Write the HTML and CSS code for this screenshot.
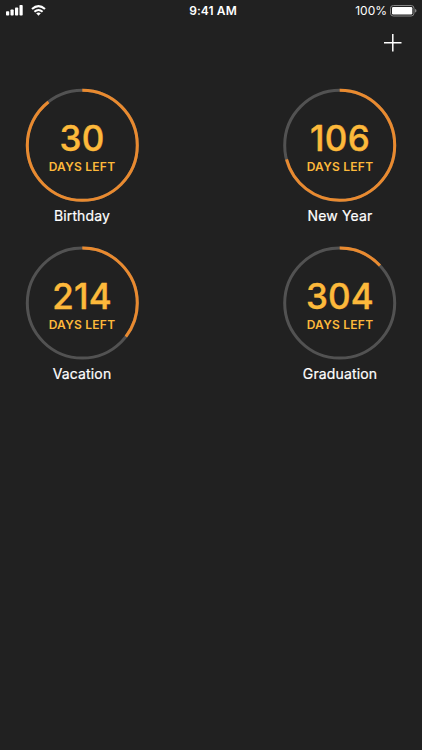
FILE: index.html
```html
<!DOCTYPE html>
<html lang="en">
<head>
<meta charset="utf-8">
<title>Countdowns</title>
<link rel="stylesheet" href="styles.css">
</head>
<body>
<header class="status">
  <div class="signals">
    <svg width="17" height="11" viewBox="0 0 17 11" fill="#fff"><rect x="0" y="6.2" width="3.2" height="4.4" rx=".8"/><rect x="4.5" y="4.4" width="3.2" height="6.2" rx=".8"/><rect x="9" y="2.4" width="3.2" height="8.2" rx=".8"/><rect x="13.5" y="0" width="3.2" height="10.6" rx=".8"/></svg>
    <svg width="16" height="11" viewBox="0 0 16 11" fill="none" stroke="#fff"><path stroke-width="2.1" d="M1 4Q7.5-1.8 14 4"/><path stroke-width="2" d="M3.4 6.8Q7.5 3.1 11.6 6.8"/><path fill="#fff" stroke="none" d="M5.2 8.3Q7.5 6.5 9.8 8.3L7.5 10.8Z"/></svg>
  </div>
  <div class="time">9:41 AM</div>
  <div class="power">
    <span>100%</span>
    <svg width="27" height="12" viewBox="0 0 27 12"><rect x=".5" y=".5" width="23.5" height="10.5" rx="2.8" fill="none" stroke="#858585"/><rect x="2" y="2" width="20.3" height="7.5" rx="1.2" fill="#fff"/><path d="M25 4Q26.5 4.2 26.5 5.8T25 7.6Z" fill="#858585"/></svg>
  </div>
</header>
<nav class="toolbar">
  <svg class="add" width="18" height="18" viewBox="0 0 18 18" stroke="#fff" stroke-width="1.5"><path d="M8.8 0V17.5M0 8.8H17.5"/></svg>
</nav>
<main class="grid">
  <section class="item">
    <div class="dial">
      <svg class="ring" viewBox="0 0 114 114"><circle class="track" cx="56.7" cy="57.3" r="55"/><circle class="progress" cx="56.7" cy="57.3" r="55" pathLength="360" stroke-dasharray="322 360"/></svg>
      <div class="count">30</div><div class="unit">DAYS LEFT</div>
    </div>
    <div class="label">Birthday</div>
  </section>
  <section class="item">
    <div class="dial">
      <svg class="ring" viewBox="0 0 114 114"><circle class="track" cx="56.7" cy="56.7" r="55"/><circle class="progress" cx="56.7" cy="56.7" r="55" pathLength="360" stroke-dasharray="255 360"/></svg>
      <div class="count">106</div><div class="unit">DAYS LEFT</div>
    </div>
    <div class="label">New Year</div>
  </section>
  <section class="item">
    <div class="dial">
      <svg class="ring" viewBox="0 0 114 114"><circle class="track" cx="56.9" cy="57.3" r="55"/><circle class="progress" cx="56.9" cy="57.3" r="55" pathLength="360" stroke-dasharray="127.6 360"/></svg>
      <div class="count">214</div><div class="unit">DAYS LEFT</div>
    </div>
    <div class="label">Vacation</div>
  </section>
  <section class="item">
    <div class="dial">
      <svg class="ring" viewBox="0 0 114 114"><circle class="track" cx="56.9" cy="56.7" r="55"/><circle class="progress" cx="56.9" cy="56.7" r="55" pathLength="360" stroke-dasharray="47 360"/></svg>
      <div class="count">304</div><div class="unit">DAYS LEFT</div>
    </div>
    <div class="label">Graduation</div>
  </section>
</main>
</body>
</html>
```

FILE: styles.css
```css
* { box-sizing: border-box; }
body {
  margin: 0;
  height: 750px;
  overflow: hidden;
  background: #212121;
  color: #fff;
  font-family: Inter, "Liberation Sans", sans-serif;
}
svg { display: block; }
.status {
  display: grid;
  grid-template-columns: 1fr auto 1fr;
  align-items: center;
  height: 21px;
  padding: 0 5px 0 6px;
  font-size: 12px;
}
.signals { display: flex; gap: 8px; }
.time { font-weight: 600; letter-spacing: .1px; padding-left: 3px; }
.power { display: flex; justify-content: flex-end; align-items: center; gap: 3px; }
.toolbar {
  display: flex;
  justify-content: flex-end;
  height: 67px;
  padding: 13px 20px 0 0;
}
.grid {
  display: grid;
  grid-template-columns: 114px 114px;
  grid-auto-rows: 158px;
  justify-content: space-between;
  padding: 0 25px;
}
.dial {
  display: grid;
  grid-template-rows: 114px;
  height: 114px;
  text-align: center;
}
.ring {
  grid-area: 1 / 1;
  width: 114px;
  height: 114px;
  transform: rotate(-90deg);
}
.track, .progress { fill: none; stroke-width: 3; }
.track { stroke: #525252; }
.progress { stroke: #e98a2f; }
.count, .unit { grid-area: 1 / 1; color: #fdb93b; }
.count {
  padding-top: 29px;
  font-size: 35px;
  line-height: 42px;
  font-weight: 500;
  letter-spacing: .2px;
  -webkit-text-stroke: .4px #fdb93b;
}
.unit {
  padding-top: 71px;
  font-size: 12px;
  line-height: 16px;
  font-weight: 600;
  letter-spacing: .25px;
}
.label {
  margin-top: 4px;
  font-size: 14px;
  line-height: 20px;
  text-align: center;
  letter-spacing: .15px;
  -webkit-text-stroke: .2px #fff;
}
```
